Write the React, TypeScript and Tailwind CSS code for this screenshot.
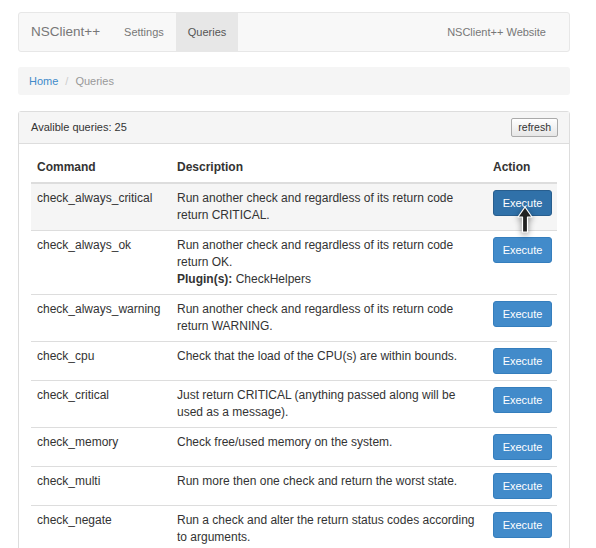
const queries = [
  { cmd: 'check_always_critical', desc: 'Run another check and regardless of its return code return CRITICAL.' },
  { cmd: 'check_always_ok', desc: 'Run another check and regardless of its return code return OK.', plugin: 'CheckHelpers' },
  { cmd: 'check_always_warning', desc: 'Run another check and regardless of its return code return WARNING.' },
  { cmd: 'check_cpu', desc: 'Check that the load of the CPU(s) are within bounds.' },
  { cmd: 'check_critical', desc: 'Just return CRITICAL (anything passed along will be used as a message).' },
  { cmd: 'check_memory', desc: 'Check free/used memory on the system.' },
  { cmd: 'check_multi', desc: 'Run more then one check and return the worst state.' },
  { cmd: 'check_negate', desc: 'Run a check and alter the return status codes according to arguments.' },
];

const Cursor = () => (
  <svg
    className="absolute left-[517px] top-[206px] drop-shadow-[0_2px_3px_rgba(0,0,0,0.45)]"
    width="16"
    height="28"
    viewBox="0 0 16 28"
  >
    <path d="M8 1 L15 11 L10.5 11 L10.5 26 L5.5 26 L5.5 11 L1 11 Z" fill="#222" stroke="#fff" strokeWidth="1.2" strokeLinejoin="round" />
  </svg>
);

export default function App() {
  return (
    <div className="relative min-h-screen bg-white pt-3 font-['Liberation_Sans',Arial,sans-serif] text-[#333]">
      <div className="ml-[18px] w-[552px]">
        <nav className="flex h-10 items-stretch rounded-[3px] border border-[#e7e7e7] bg-[#f8f8f8]">
          <span className="flex items-center px-3 text-[13.5px] text-[#777]">NSClient++</span>
          <span className="flex items-center px-3 text-[11px] text-[#777]">Settings</span>
          <span className="flex items-center bg-[#e7e7e7] px-3 text-[11px] text-[#555]">Queries</span>
          <span className="ml-auto flex items-center px-3 pr-[23px] text-[11px] text-[#777]">NSClient++ Website</span>
        </nav>

        <div className="mt-[15px] flex h-7 items-center gap-[7px] rounded-[3px] bg-[#f5f5f5] px-[11px] text-[11px]">
          <span className="text-[#428bca]">Home</span>
          <span className="text-[#ccc]">/</span>
          <span className="text-[#999]">Queries</span>
        </div>

        <div className="mt-4 rounded-[3px] border border-[#ddd]">
          <div className="flex h-8 items-center justify-between border-b border-[#ddd] bg-[#f5f5f5] pl-3 pr-[11px] text-[11px]">
            <span>Avalible queries: 25</span>
            <button
              type="button"
              className="h-[19px] rounded-[2px] border border-[#aaa] bg-gradient-to-b from-white to-[#e6e6e6] px-[6px] text-[10.5px] leading-none text-[#333]"
            >
              refresh
            </button>
          </div>
          <div className="px-3 pt-[9px] pb-4">
            <table className="w-full table-fixed border-collapse text-[12px] leading-[17px]">
              <colgroup>
                <col className="w-[140px]" />
                <col />
                <col className="w-[70px]" />
              </colgroup>
              <thead>
                <tr className="border-b-2 border-[#ddd]">
                  <th className="p-[6px] text-left font-bold">Command</th>
                  <th className="p-[6px] text-left font-bold">Description</th>
                  <th className="p-[6px] text-left font-bold">Action</th>
                </tr>
              </thead>
              <tbody>
                {queries.map((q, i) => (
                  <tr key={q.cmd} className={i === 0 ? 'border-t border-[#ddd] bg-[#f5f5f5]' : 'border-t border-[#ddd]'}>
                    <td className="p-[6px] align-top">{q.cmd}</td>
                    <td className="p-[6px] align-top">
                      {q.desc}
                      {q.plugin && (
                        <div>
                          <b>Plugin(s):</b> {q.plugin}
                        </div>
                      )}
                    </td>
                    <td className="p-[6px] align-top">
                      <button
                        type="button"
                        className={
                          i === 0
                            ? 'h-[26px] w-[59px] rounded-[3px] border border-[#285e8e] bg-[#3071a9] text-[11px] text-white'
                            : 'h-[26px] w-[59px] rounded-[3px] border border-[#357ebd] bg-[#428bca] text-[11px] text-white'
                        }
                      >
                        Execute
                      </button>
                    </td>
                  </tr>
                ))}
              </tbody>
            </table>
          </div>
        </div>
      </div>
      <Cursor />
    </div>
  );
}
